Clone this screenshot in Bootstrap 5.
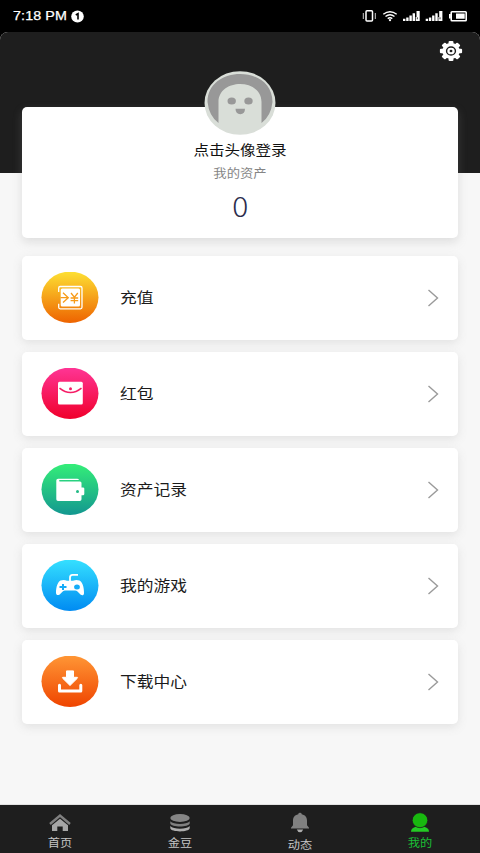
<!DOCTYPE html>
<html lang="zh-CN">
<head>
<meta charset="utf-8">
<meta name="viewport" content="width=device-width, initial-scale=1">
<title>我的</title>
<link href="https://cdn.jsdelivr.net/npm/bootstrap@5.3.0/dist/css/bootstrap.min.css" rel="stylesheet">
<style>
body{font-family:"Liberation Sans","Noto Sans CJK SC",sans-serif;background:#000;height:853px;overflow:hidden}
svg{display:block;flex:none}
.status{height:32px;padding:0 13px 0 13px;color:#fff}
.clock{font-size:13px;line-height:32px;letter-spacing:.1px;-webkit-text-stroke:.25px #fff;width:58px;white-space:nowrap;transform:scaleX(1.1);transform-origin:left center}
.wide{display:inline-block;transform:scaleX(1.11);white-space:nowrap}
.screen{height:821px;background:#f7f7f7;border-radius:8px 8px 0 0;overflow:hidden}
.hero{height:141px;background:#1e1e1e;padding:8px 17px 0 0}
.content{margin:-66px 22px 0;gap:12px}
.panel{background:#fff;border-radius:5px;box-shadow:0 3px 10px rgba(125,125,125,.17)}
.profile{height:131px;margin-bottom:6px;box-shadow:0 4px 10px rgba(150,150,150,.26)}
.avatar{margin-top:-36px}
.login{font-size:14px;line-height:20px;color:#111;margin-top:5px}
.asset{font-size:12px;line-height:18px;color:#858585;margin-top:5px}
.amount{font-family:"Noto Sans CJK SC",sans-serif;font-weight:300;font-size:27px;line-height:34px;color:#2b2c4c;margin-top:6px}
.entry{height:84px;padding:0 19px 0 19px}
.entry .wide{font-size:15.1px;line-height:24px;color:#1b1b1b;transform-origin:left center;margin-left:20.500px;margin-top:-1px}
.chevron{margin-top:-1px}
.tabs{height:48px;background:#1e1e1e;color:#c4c4c4;box-shadow:0 -1px 0 #e2e2e2}
.tabs>div{width:120px;padding-top:5px}
.tabs .wide{font-size:11px;line-height:14px;margin-top:2px}
.tabs .low{margin-top:4px}
.tabs .on{color:#1bbf35}
</style>
</head>
<body>
<header class="status d-flex align-items-center">
  <span class="clock">7:18 PM</span>
  <svg width="13" height="13" viewBox="0 0 13 13"><ellipse cx="6.5" cy="6.5" rx="6.3" ry="5.9" fill="#fff"/><path d="M4.8 5 7 3.6V9.6" fill="none" stroke="#000" stroke-width="1.6"/></svg>
  <svg class="ms-auto" width="106" height="16" viewBox="361 8 106 16" fill="#fff">
    <rect x="366" y="10.700" width="6.500" height="10.300" rx="1" fill="none" stroke="#fff" stroke-width="1.500"/>
    <path d="M363.300 13v6M375.300 13v6" stroke="#ccc" stroke-width="1"/>
    <g fill="none" stroke="#fff" stroke-width="1.400"><path d="M383.300 14.300q6.700-5.200 13.400 0M385.500 16.500q4.500-3.500 9 0M387.700 18.600q2.300-1.600 4.600 0"/></g><circle cx="390" cy="20.200" r="1.100"/>
    <g id="signal"><path d="M403 18.700h2.400V21H403zM406.200 17.500h2.400V21h-2.400zM409.400 15.500h2.400V21h-2.400zM412.600 13.300h2.400V21h-2.400zM416.500 11h3.200v10h-4v-4h.8z"/><path d="M417.300 17.300v2" stroke="#000" stroke-width=".8"/></g>
    <use href="#signal" x="22.700"/>
    <rect x="451.200" y="11.700" width="15" height="9" rx=".8" fill="none" stroke="#fff" stroke-width="1.600"/><path d="M449 14h1.800v4.500H449zM456 13.500h8.700v5.300H456z"/>
  </svg>
</header>
<main class="screen d-flex flex-column">
  <div class="hero d-flex justify-content-end align-items-start">
    <svg width="24" height="22" viewBox="-12 -11 24 22">
      <g transform="scale(1.11 1)"><g fill="#fff"><circle r="7.900"/><g id="teeth"><rect x="-2.200" y="-10" width="4.400" height="20" rx="1"/><rect x="-10" y="-2.200" width="20" height="4.400" rx="1"/></g><use href="#teeth" transform="rotate(45)"/></g><circle r="4" fill="none" stroke="#1e1e1e" stroke-width="1.300"/><circle r="1.300" fill="#1e1e1e"/></g>
    </svg>
  </div>
  <div class="content d-flex flex-column">
    <section class="panel profile d-flex flex-column align-items-center">
      <svg class="avatar" width="72" height="64" viewBox="0 0 72 64">
        <ellipse cx="36" cy="32" rx="35.500" ry="31.800" fill="#d9ded8"/>
        <path d="M3.500 31C3.500-6.500 68.500-6.500 68.500 31Q67 45 57.500 52V31C57.500 7 14.500 7 14.500 31V52Q5 45 3.500 31z" fill="#989898"/>
        <ellipse cx="27.700" cy="30" rx="4.200" ry="3.600" fill="#989898"/><ellipse cx="44.500" cy="30" rx="4.200" ry="3.600" fill="#989898"/>
        <path d="M31.500 37.800h9.500q0 5.400-4.700 5.400t-4.800-5.400z" fill="#989898"/>
      </svg>
      <span class="wide login">点击头像登录</span>
      <span class="wide asset">我的资产</span>
      <span class="wide amount">0</span>
    </section>

    <div class="panel entry d-flex align-items-center">
      <svg width="58" height="52" viewBox="0 0 58 52">
        <defs><linearGradient id="gold" x2="0" y2="1"><stop stop-color="#fde033"/><stop offset="1" stop-color="#ee6300"/></linearGradient></defs>
        <ellipse cx="29" cy="25.300" rx="28.500" ry="25.700" fill="url(#gold)"/>
        <path d="M17.700 20v-4q0-1.500 1.500-1.500h20.300q1.500 0 1.500 1.500v19.300q0 1.500-1.500 1.500H19.200q-1.500 0-1.500-1.500v-3.500" fill="none" stroke="#fff" stroke-width="1.300"/>
        <rect x="19.700" y="16.600" width="19.300" height="18" rx="1.500" fill="#fff"/>
        <path d="M19.500 25.700h7M22 20.800l5.300 4.900-5.300 4.900M30 21l3.400 4.200 3.400-4.200M33.400 25v6.500M29.600 26h7.600M29.600 28.600h7.600" fill="none" stroke="#f79b19" stroke-width="1.300"/>
      </svg>
      <span class="wide">充值</span>
      <svg class="chevron ms-auto" width="12" height="18" viewBox="0 0 12 18"><path d="M1.500 1 10.500 9l-9 8" fill="none" stroke="#9a9a9a" stroke-width="1.400"/></svg>
    </div>

    <div class="panel entry d-flex align-items-center">
      <svg width="58" height="52" viewBox="0 0 58 52">
        <defs><linearGradient id="pink" x2="0" y2="1"><stop stop-color="#ff3595"/><stop offset="1" stop-color="#f0002b"/></linearGradient></defs>
        <ellipse cx="29" cy="25.300" rx="28.500" ry="25.700" fill="url(#pink)"/>
        <rect x="17" y="13.700" width="24.800" height="22.800" rx="1.500" fill="#fff"/>
        <path d="M18.500 20.200q11 8.800 22 0" fill="none" stroke="#f51d66" stroke-width="1.500"/><circle cx="29.500" cy="20.700" r="1.500" fill="#f51d66"/>
      </svg>
      <span class="wide">红包</span>
      <svg class="chevron ms-auto" width="12" height="18" viewBox="0 0 12 18"><path d="M1.500 1 10.500 9l-9 8" fill="none" stroke="#9a9a9a" stroke-width="1.400"/></svg>
    </div>

    <div class="panel entry d-flex align-items-center">
      <svg width="58" height="52" viewBox="0 0 58 52">
        <defs><linearGradient id="green" x2="0" y2="1"><stop stop-color="#34ee78"/><stop offset="1" stop-color="#139790"/></linearGradient></defs>
        <ellipse cx="29" cy="25.300" rx="28.500" ry="25.700" fill="url(#green)"/>
        <path d="M15.300 16.500q0-1.700 1.800-1.700H36q1.700 0 2 1.200H18.500q-.8.700 0 1.600H39q1.500 0 1.500 1.500v4.300h1.500q1.300 0 1.300 1.200v5.400q0 1.200-1.300 1.200h-1.500v4q0 1.700-1.700 1.700H17q-1.700 0-1.700-1.700z" fill="#fff"/>
        <circle cx="36.500" cy="27.500" r="1.500" fill="#22ba85"/>
      </svg>
      <span class="wide">资产记录</span>
      <svg class="chevron ms-auto" width="12" height="18" viewBox="0 0 12 18"><path d="M1.500 1 10.500 9l-9 8" fill="none" stroke="#9a9a9a" stroke-width="1.400"/></svg>
    </div>

    <div class="panel entry d-flex align-items-center">
      <svg width="58" height="52" viewBox="0 0 58 52">
        <defs><linearGradient id="blue" x2="0" y2="1"><stop stop-color="#35e0ff"/><stop offset="1" stop-color="#008bf2"/></linearGradient></defs>
        <ellipse cx="29" cy="25.300" rx="28.500" ry="25.700" fill="url(#blue)"/>
        <path d="M29 21v-3.500q0-2.700 2.500-2.700h5.500" fill="none" stroke="#fff" stroke-width="1.800"/>
        <path d="M21 20.200q2.500-.5 5 .5h6q3-1 5-.5c4.500 0 6.200 7.800 6 13-.2 3-3 2.200-4.500.3l-2.300-2.300q-.8-.7-2-.7H24q-1.200 0-2 .7L19.700 33.500c-2 2.300-4.700 2-4.700-.8 0-5 1.500-12.500 6-12.500z" fill="#fff"/>
        <path d="M22 24v6M18.500 27h7" stroke="#15acf8" stroke-width="2"/><ellipse cx="36" cy="27" rx="2.900" ry="2.500" fill="#15acf8"/>
      </svg>
      <span class="wide">我的游戏</span>
      <svg class="chevron ms-auto" width="12" height="18" viewBox="0 0 12 18"><path d="M1.500 1 10.500 9l-9 8" fill="none" stroke="#9a9a9a" stroke-width="1.400"/></svg>
    </div>

    <div class="panel entry d-flex align-items-center">
      <svg width="58" height="52" viewBox="0 0 58 52">
        <defs><linearGradient id="orange" x2="0" y2="1"><stop stop-color="#ff9635"/><stop offset="1" stop-color="#ef4400"/></linearGradient></defs>
        <ellipse cx="29" cy="25.300" rx="28.500" ry="25.700" fill="url(#orange)"/>
        <path d="M25.500 14.900h7v6.400h3.800q.6.500 0 1L29 29.500l-7.300-7.200q-.6-.5 0-1h3.800z" fill="#fff" stroke="#fff" stroke-width="1" stroke-linejoin="round"/>
        <path d="M18.500 29.300v5.800h21.300v-5.800" fill="none" stroke="#fff" stroke-width="3" stroke-linecap="round" stroke-linejoin="round"/>
      </svg>
      <span class="wide">下载中心</span>
      <svg class="chevron ms-auto" width="12" height="18" viewBox="0 0 12 18"><path d="M1.500 1 10.500 9l-9 8" fill="none" stroke="#9a9a9a" stroke-width="1.400"/></svg>
    </div>
  </div>

  <nav class="tabs d-flex mt-auto">
    <div class="d-flex flex-column align-items-center">
      <svg width="24" height="24" viewBox="0 0 24 24"><path d="M2 14 12 5.500 22 14" fill="none" stroke="#808080" stroke-width="2.400"/><path d="M4 15.200 12 8.800l8 6.400V21h-5.300v-4.500H9.300V21H4z" fill="#a6a6a6"/></svg>
      <span class="wide">首页</span>
    </div>
    <div class="d-flex flex-column align-items-center">
      <svg width="24" height="24" viewBox="0 0 24 24"><ellipse cx="12" cy="8" rx="9.700" ry="3.900" fill="#858585"/><path d="M2.300 11.300c3 3.500 16.400 3.500 19.400 0v2.200c-1 4-18.400 4-19.400 0z" fill="#808080"/><path d="M2.300 16.100c3 3.600 16.400 3.600 19.400 0v2.200c-1 4.200-18.400 4.200-19.400 0z" fill="#adadad"/></svg>
      <span class="wide">金豆</span>
    </div>
    <div class="d-flex flex-column align-items-center">
      <svg width="24" height="24" viewBox="0 0 24 24"><path d="M10.300 4.200q0-1.400 1.700-1.400t1.700 1.400c4 .8 5.300 3.500 5.300 6.300v4.700l2 2.500v.7H3v-.7l2-2.500v-4.700c0-2.800 1.300-5.500 5.300-6.300z" fill="#808080"/><path d="M8.800 19.400h6.400Q14 22.300 12 22.300t-3.200-2.900z" fill="#adadad"/></svg>
      <span class="wide low">动态</span>
    </div>
    <div class="d-flex flex-column align-items-center on">
      <svg width="24" height="24" viewBox="0 0 24 24"><path d="M3 21.700c0-3 2-4.200 5-5h8c3 .8 5 2 5 5z" fill="#24cb24"/><ellipse cx="12" cy="10.200" rx="7.800" ry="7.500" fill="#18b80f" stroke="#1e1e1e" stroke-width=".8"/></svg>
      <span class="wide">我的</span>
    </div>
  </nav>
</main>
<script src="https://cdn.jsdelivr.net/npm/bootstrap@5.3.0/dist/js/bootstrap.bundle.min.js"></script>
</body>
</html>
